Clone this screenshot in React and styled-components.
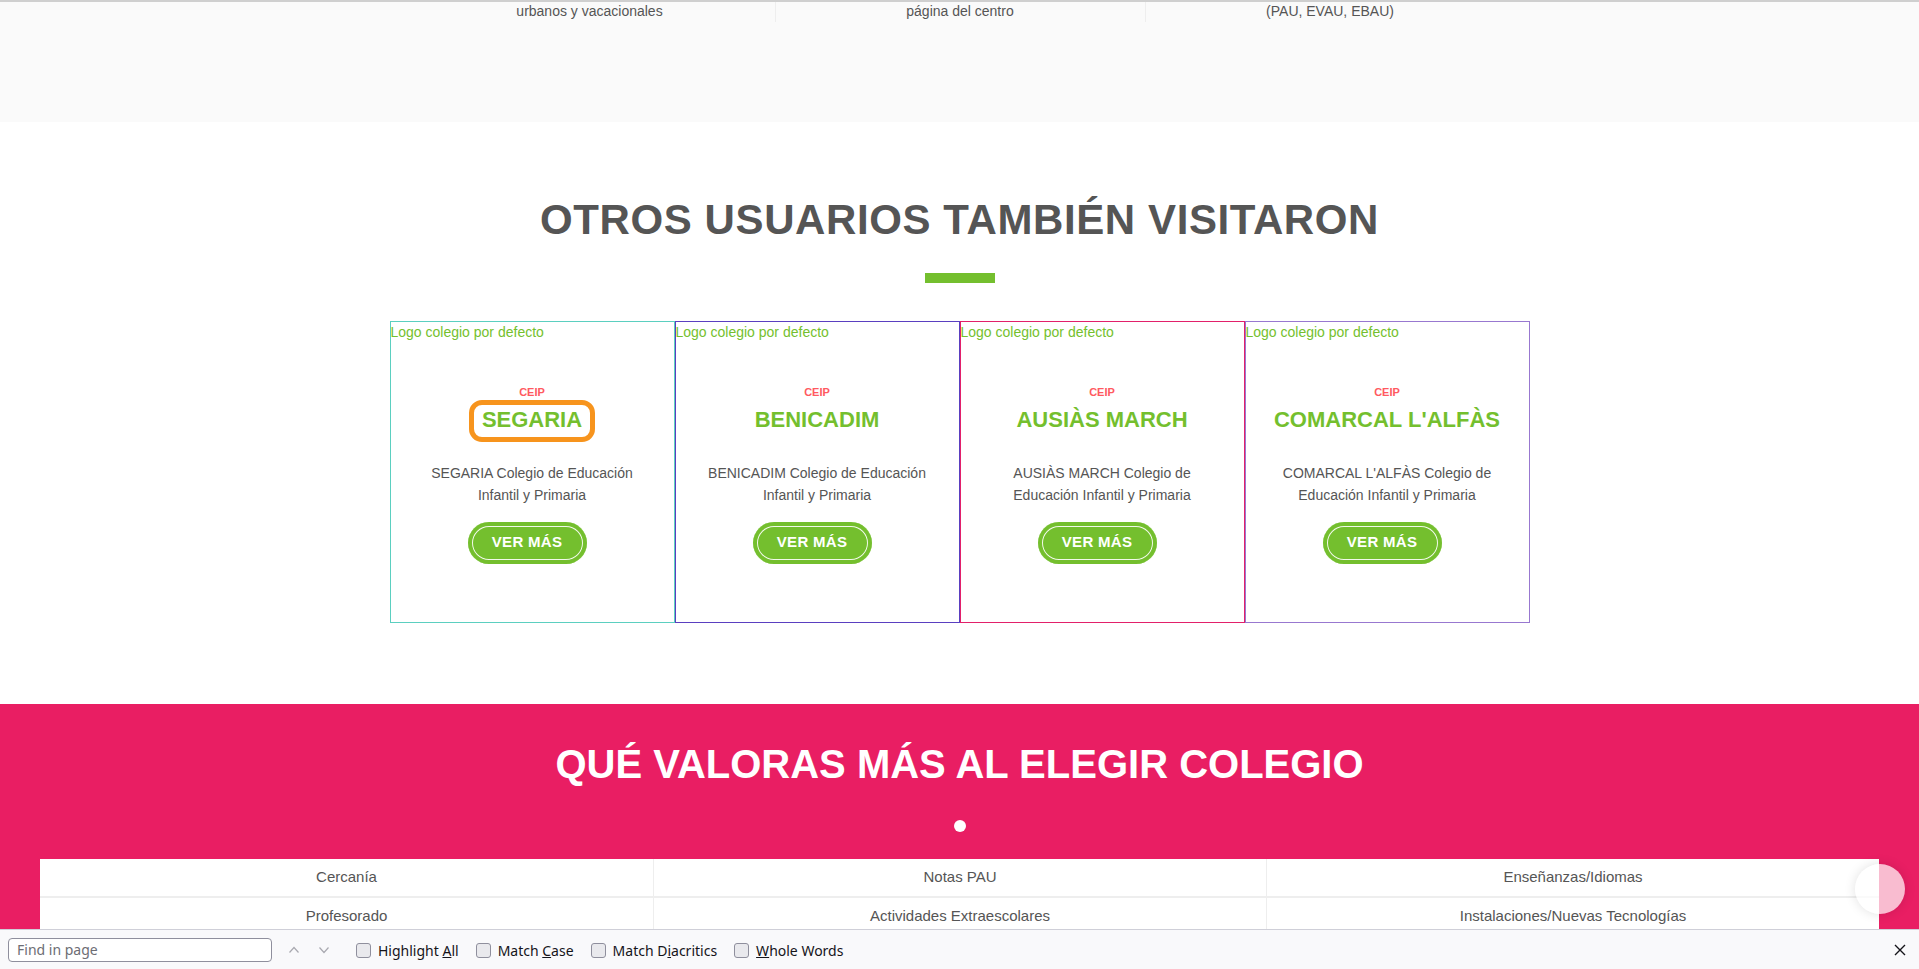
import React from "react";
import styled, { createGlobalStyle } from "styled-components";

const GREEN = "#74bf2e";
const PINK = "#e91e63";

const GlobalStyle = createGlobalStyle`
  html, body {
    margin: 0;
    padding: 0;
    height: 100%;
    overflow: hidden;
    background: #fff;
  }
  body {
    font-family: "Liberation Sans", Arial, sans-serif;
    color: #555;
  }
  * { box-sizing: border-box; }
`;

const Viewport = styled.div`
  height: 969px;
  display: flex;
  flex-direction: column;
`;

const Page = styled.div`
  position: relative;
  flex: 1;
  overflow: hidden;
`;

/* ---------- top strip (remains of previous section) ---------- */

const TopStrip = styled.section`
  height: 122px;
  background: #fafafa;
  border-top: 2px solid #cfcfcf;
`;

const StripInner = styled.div`
  width: 1110px;
  margin: 0 auto;
  display: grid;
  grid-template-columns: repeat(3, 1fr);
`;

const StripCol = styled.div`
  height: 20px;
  font-size: 14px;
  line-height: 18px;
  text-align: center;
  color: #555;
  border-left: ${({ $first }) => ($first ? "none" : "1px solid #eee")};
`;

/* ---------- "otros usuarios" ---------- */

const Visited = styled.section`
  padding: 73px 0 81px;
  background: #fff;
`;

const SectionTitle = styled.h2`
  margin: 0;
  font-size: 42px;
  line-height: 50px;
  font-weight: 700;
  letter-spacing: 0.6px;
  text-align: center;
  color: #555;
`;

const Accent = styled.div`
  width: 70px;
  height: 10px;
  margin: 28px auto 0;
  background: ${GREEN};
`;

const CardRow = styled.div`
  width: 1140px;
  margin: 38px auto 0;
  display: grid;
  grid-template-columns: repeat(4, 285px);
`;

const Card = styled.div`
  height: 302px;
  border: 1px solid ${({ $color }) => $color};
  display: flex;
  flex-direction: column;
  align-items: center;
  padding-bottom: 58px;
`;

const LogoAlt = styled.div`
  align-self: stretch;
  height: 63px;
  padding-top: 1px;
  font-size: 14px;
  line-height: 18px;
  color: ${GREEN};
`;

const Kind = styled.div`
  font-size: 11px;
  line-height: 14px;
  font-weight: 700;
  color: #ff5a5f;
`;

const Name = styled.a`
  margin-top: 6px;
  padding: 2px 8px 4px;
  font-size: 22px;
  line-height: 26px;
  font-weight: 700;
  color: ${GREEN};
  text-decoration: none;
  border-radius: 8px;
  outline: ${({ $focused }) => ($focused ? "5px solid #f7941d" : "none")};
`;

const Desc = styled.p`
  margin: 25px 0 0;
  padding: 0 30px;
  font-size: 14px;
  line-height: 22px;
  text-align: center;
  color: #555;
`;

const MoreButton = styled.button`
  margin: 16px 10px 0 0;
  width: 119px;
  height: 42px;
  padding: 0 0 3px;
  border: none;
  border-radius: 21px;
  background: ${GREEN};
  box-shadow: inset 0 0 0 4px ${GREEN}, inset 0 0 0 5px rgba(255, 255, 255, 0.9);
  color: #fff;
  font-family: "Liberation Sans", Arial, sans-serif;
  font-size: 15px;
  font-weight: 700;
  letter-spacing: 0.3px;
  cursor: pointer;
`;

/* ---------- "qué valoras" ---------- */

const Values = styled.section`
  background: ${PINK};
  padding-top: 36px;
`;

const ValuesTitle = styled.h2`
  margin: 0;
  font-size: 40px;
  line-height: 48px;
  font-weight: 700;
  text-align: center;
  color: #fff;
`;

const Dot = styled.div`
  width: 12px;
  height: 12px;
  margin: 32px auto 0;
  border-radius: 50%;
  background: #fff;
`;

const ValuesTable = styled.div`
  margin: 27px 40px 0;
  background: #fff;
  display: grid;
  grid-template-columns: repeat(3, 1fr);
`;

const Cell = styled.div`
  padding: 9px 10px 10px;
  font-size: 15px;
  line-height: 18px;
  text-align: center;
  color: #555;
  border-left: ${({ $col }) => ($col > 0 ? "1px solid #eee" : "none")};
  border-top: ${({ $row }) => ($row > 0 ? "2px solid #eee" : "none")};
`;

const ScrollTop = styled.div`
  position: absolute;
  left: 1855px;
  top: 864px;
  width: 50px;
  height: 50px;
  border-radius: 50%;
  background: rgba(255, 255, 255, 0.7);
  box-shadow: 0 0 12px rgba(0, 0, 0, 0.12);
`;

/* ---------- browser find bar ---------- */

const FindBar = styled.div`
  height: 40px;
  flex-shrink: 0;
  display: flex;
  align-items: center;
  padding: 1px 8px 0;
  background: #f9f9fb;
  border-top: 1px solid #cfcfd8;
  font-family: "Noto Sans", "Open Sans", sans-serif;
  font-size: 14px;
  color: #15141a;
`;

const FindInput = styled.div`
  width: 264px;
  height: 24px;
  padding: 0 8px;
  border: 1px solid #8f8f9d;
  border-radius: 4px;
  background: #fff;
  color: #6d6d74;
  line-height: 22px;
`;

const NavArrows = styled.div`
  display: flex;
  gap: 18px;
  margin: 0 26px 0 16px;
  color: #a9a9b0;
`;

const Option = styled.label`
  display: flex;
  align-items: center;
  gap: 7px;
  margin-right: 17px;
  white-space: nowrap;
`;

const Box = styled.span`
  width: 15px;
  height: 15px;
  border: 1px solid #8f8f9d;
  border-radius: 3px;
  background: #e9e9ed;
`;

const Key = styled.span`
  text-decoration: underline;
`;

const CloseBtn = styled.div`
  margin-left: auto;
  margin-right: 4px;
  display: flex;
  color: #15141a;
`;

const cards = [
  { color: "#5bcfc0", name: "SEGARIA", desc: "SEGARIA Colegio de Educación Infantil y Primaria", focused: true },
  { color: "#5a3fc0", name: "BENICADIM", desc: "BENICADIM Colegio de Educación Infantil y Primaria" },
  { color: "#e2206a", name: "AUSIÀS MARCH", desc: "AUSIÀS MARCH Colegio de Educación Infantil y Primaria" },
  { color: "#9878d0", name: "COMARCAL L'ALFÀS", desc: "COMARCAL L'ALFÀS Colegio de Educación Infantil y Primaria" },
];

const values = [
  ["Cercanía", "Notas PAU", "Enseñanzas/Idiomas"],
  ["Profesorado", "Actividades Extraescolares", "Instalaciones/Nuevas Tecnologías"],
];

const Chevron = ({ up }) => (
  <svg width="12" height="12" viewBox="0 0 12 12" fill="none" stroke="currentColor" strokeWidth="1.2">
    {up ? <path d="M1.5 8.5 L6 3.5 L10.5 8.5" /> : <path d="M1.5 3.5 L6 8.5 L10.5 3.5" />}
  </svg>
);

const App = () => {
  return (
    <Viewport>
      <GlobalStyle />
      <Page>
        <TopStrip>
          <StripInner>
            <StripCol $first>urbanos y vacacionales</StripCol>
            <StripCol>página del centro</StripCol>
            <StripCol>(PAU, EVAU, EBAU)</StripCol>
          </StripInner>
        </TopStrip>

        <Visited>
          <SectionTitle>OTROS USUARIOS TAMBIÉN VISITARON</SectionTitle>
          <Accent />
          <CardRow>
            {cards.map((c) => (
              <Card key={c.name} $color={c.color}>
                <LogoAlt>Logo colegio por defecto</LogoAlt>
                <Kind>CEIP</Kind>
                <Name $focused={c.focused}>{c.name}</Name>
                <Desc>{c.desc}</Desc>
                <MoreButton>VER MÁS</MoreButton>
              </Card>
            ))}
          </CardRow>
        </Visited>

        <Values>
          <ValuesTitle>QUÉ VALORAS MÁS AL ELEGIR COLEGIO</ValuesTitle>
          <Dot />
          <ValuesTable>
            {values.map((row, r) =>
              row.map((v, c) => (
                <Cell key={v} $row={r} $col={c}>
                  {v}
                </Cell>
              ))
            )}
          </ValuesTable>
        </Values>

        <ScrollTop />
      </Page>

      <FindBar>
        <FindInput>Find in page</FindInput>
        <NavArrows>
          <Chevron up />
          <Chevron />
        </NavArrows>
        <Option>
          <Box />
          <span>Highlight <Key>A</Key>ll</span>
        </Option>
        <Option>
          <Box />
          <span>Match <Key>C</Key>ase</span>
        </Option>
        <Option>
          <Box />
          <span>Match D<Key>i</Key>acritics</span>
        </Option>
        <Option>
          <Box />
          <span><Key>W</Key>hole Words</span>
        </Option>
        <CloseBtn>
          <svg width="14" height="14" viewBox="0 0 14 14" stroke="currentColor" strokeWidth="1.4">
            <path d="M2 2 L12 12 M12 2 L2 12" />
          </svg>
        </CloseBtn>
      </FindBar>
    </Viewport>
  );
};

export default App;
